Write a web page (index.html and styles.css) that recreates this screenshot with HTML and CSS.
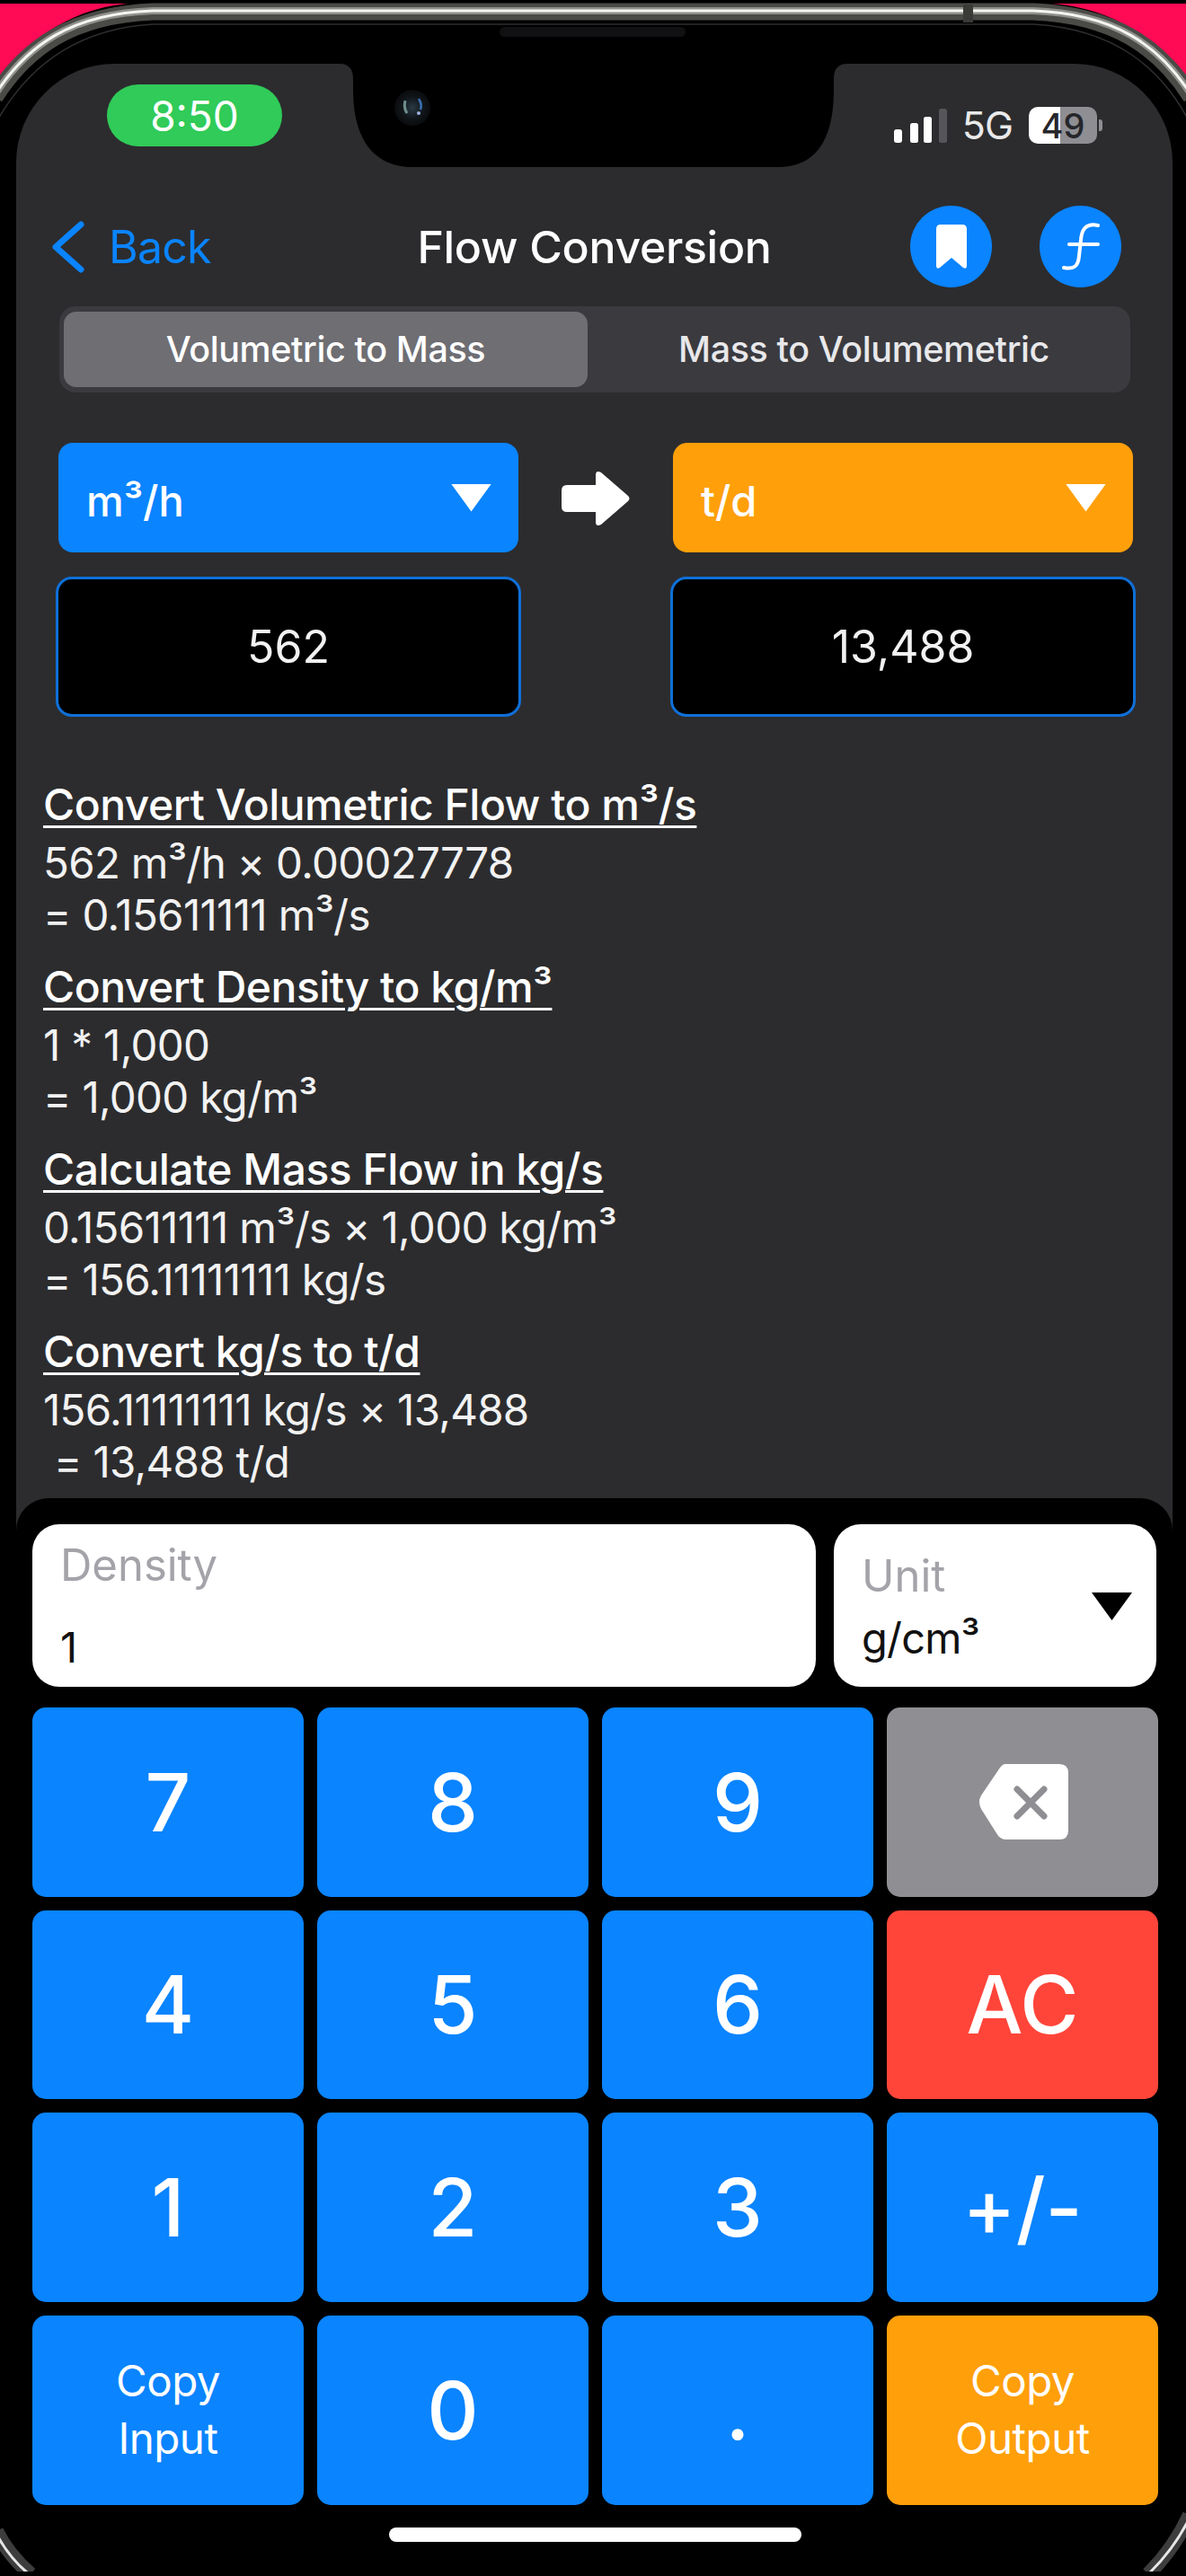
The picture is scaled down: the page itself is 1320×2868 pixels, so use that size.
FILE: index.html
```html
<!DOCTYPE html>
<html lang="en">
<head>
<meta charset="utf-8">
<title>Flow Conversion</title>
<link rel="stylesheet" href="styles.css">
</head>
<body>
<main class="screen">
  <header class="status">
    <div class="time">8:50</div>
    <div class="status-right">
      <svg class="signal" viewBox="0 0 59 38" width="59" height="38" aria-hidden="true">
        <rect x="0" y="23" width="9" height="15" rx="3" fill="#fff"/>
        <rect x="18" y="16" width="9" height="22" rx="2.5" fill="#fff"/>
        <rect x="33" y="9" width="9" height="29" rx="2.5" fill="#fff"/>
        <rect x="50" y="0" width="9" height="38" rx="2.5" fill="#55555a"/>
      </svg>
      <span class="net">5G</span>
      <span class="battery"><span class="battery-level">49</span></span>
      <span class="battery-nub"></span>
    </div>
  </header>

  <nav class="nav">
    <div class="back">
      <svg class="chevron" viewBox="0 0 38 58" width="38" height="58" aria-hidden="true"><path d="M33 4 L5 29 L33 54" fill="none" stroke="#0a84ff" stroke-width="7" stroke-linecap="round" stroke-linejoin="round"/></svg>
      <span>Back</span>
    </div>
    <h1 class="title">Flow Conversion</h1>
    <div class="nav-actions">
      <button class="round-btn" type="button" aria-label="Bookmark">
        <svg viewBox="0 0 34 50" width="34" height="50" aria-hidden="true"><path d="M5 0 H29 Q34 0 34 5 V46 Q34 50 30 48 L17 37 L4 48 Q0 50 0 46 V5 Q0 0 5 0 Z" fill="#fff"/></svg>
      </button>
      <button class="round-btn" type="button" aria-label="Formula">
        <svg viewBox="0 0 91 91" width="91" height="91" aria-hidden="true"><path d="M65 22 C52 19 47 26 46 38 L44 56 C43 68 38 71 27 69 M33 43 H65" fill="none" stroke="#fff" stroke-width="4" stroke-linecap="round"/></svg>
      </button>
    </div>
  </nav>

  <div class="segmented">
    <div class="segment is-active">Volumetric to Mass</div>
    <div class="segment">Mass to Volumemetric</div>
  </div>

  <section class="converter">
    <div class="select select-blue"><span class="select-label">m³/h</span><i class="tri"></i></div>
    <svg class="arrow" viewBox="0 0 78 62" width="78" height="62" aria-hidden="true"><path d="M7 16 H39 V5 Q39 -1 45 2 L75 28 Q78 31 75 34 L45 60 Q39 63 39 57 V46 H7 Q1 46 1 40 V22 Q1 16 7 16 Z" fill="#fff"/></svg>
    <div class="select select-orange"><span class="select-label">t/d</span><i class="tri"></i></div>
    <div class="value">562</div>
    <div></div>
    <div class="value">13,488</div>
  </section>

  <section class="steps">
    <div class="step">
      <h2>Convert Volumetric Flow to m³/s</h2>
      <p>562 m³/h × 0.00027778</p>
      <p>= 0.15611111 m³/s</p>
    </div>
    <div class="step">
      <h2>Convert Density to kg/m³</h2>
      <p>1 * 1,000</p>
      <p>= 1,000 kg/m³</p>
    </div>
    <div class="step">
      <h2>Calculate Mass Flow in kg/s</h2>
      <p>0.15611111 m³/s × 1,000 kg/m³</p>
      <p>= 156.11111111 kg/s</p>
    </div>
    <div class="step">
      <h2>Convert kg/s to t/d</h2>
      <p>156.11111111 kg/s × 13,488</p>
      <p class="indent">= 13,488 t/d</p>
    </div>
  </section>

  <section class="keypad">
    <div class="fields">
      <div class="field field-density">
        <label>Density</label>
        <div class="field-value">1</div>
      </div>
      <div class="field field-unit">
        <div>
          <label>Unit</label>
          <div class="field-value">g/cm³</div>
        </div>
        <i class="tri tri-dark"></i>
      </div>
    </div>
    <div class="keys">
      <button class="key" type="button">7</button>
      <button class="key" type="button">8</button>
      <button class="key" type="button">9</button>
      <button class="key key-grey" type="button" aria-label="Delete">
        <svg class="backspace" viewBox="0 0 100 84" width="100" height="84" aria-hidden="true"><path d="M30 0 H90 Q100 0 100 10 V74 Q100 84 90 84 H30 Q26 84 22 80 L3 50 Q-1 42 3 35 L24 4 Q27 0 30 0 Z" fill="#fff"/><path d="M43 28 L73 58 M73 28 L43 58" stroke="#8e8e93" stroke-width="7" stroke-linecap="round"/></svg>
      </button>
      <button class="key" type="button">4</button>
      <button class="key" type="button">5</button>
      <button class="key" type="button">6</button>
      <button class="key key-red" type="button">AC</button>
      <button class="key" type="button">1</button>
      <button class="key" type="button">2</button>
      <button class="key" type="button">3</button>
      <button class="key" type="button">+/-</button>
      <button class="key key-small" type="button">Copy<br>Input</button>
      <button class="key" type="button">0</button>
      <button class="key" type="button">.</button>
      <button class="key key-small key-orange" type="button">Copy<br>Output</button>
    </div>
    <div class="home"></div>
  </section>
</main>

<svg class="frame" viewBox="0 0 1320 2868" width="1320" height="2868" aria-hidden="true">
  <defs>
    <radialGradient id="lens" cx="50%" cy="50%" r="50%">
      <stop offset="0" stop-color="#2b3a46"/>
      <stop offset="0.6" stop-color="#10161b"/>
      <stop offset="1" stop-color="#0b0b0c"/>
    </radialGradient>
  </defs>
  <path d="M378 71 Q393 71 393 88 V100 C393 160 420 186 459 186 H866 C905 186 928 160 928 100 V88 Q928 71 943 71 Z" fill="#000"/>
  <rect x="556" y="30" width="207" height="11" rx="5.5" fill="#111113"/>
  <circle cx="459" cy="120" r="20" fill="url(#lens)"/>
  <path d="M451 112 Q449 120 453 126" stroke="#6f8f8a" stroke-width="3" fill="none"/>
  <circle cx="466" cy="126" r="2" fill="#9fb3e0"/>
  <path d="M466 110 Q470 116 468 122" stroke="#3c6fb0" stroke-width="2.5" fill="none"/>

  <path d="M0 4 H142 C100 8 50 25 0 84 Z" fill="#ff0a55"/>
  <path d="M1320 4 H1170 C1220 8 1270 25 1320 88 Z" fill="#ff0a55"/>
  <rect x="0" y="0" width="1320" height="4" fill="#000"/>

  <g fill="none">
    <path d="M-6 108 C30 52 80 17 170 13 H1150 C1240 17 1290 52 1326 108" stroke="#4a4a47" stroke-width="19"/>
    <path d="M-6 106 C30 50 80 15 170 12 H1150 C1240 15 1290 50 1326 106" stroke="#8f8f8b" stroke-width="8"/>
    <path d="M-6 106 C30 50 80 15 170 12 H1150 C1240 15 1290 50 1326 106" stroke="#f4f4f0" stroke-width="3"/>
    <path d="M-4 136 C30 75 85 32 170 27 H1150 C1240 32 1292 75 1324 136" stroke="#2e2e30" stroke-width="1.5"/>
    <path d="M-4 2818 C6 2838 18 2852 34 2866" stroke="#3d3d3d" stroke-width="16"/>
    <path d="M-4 2821 C6 2840 16 2852 30 2864" stroke="#e6e6e6" stroke-width="3"/>
    <path d="M1324 2800 C1312 2826 1298 2846 1278 2866" stroke="#3d3d3d" stroke-width="16"/>
    <path d="M1324 2803 C1312 2828 1298 2846 1280 2864" stroke="#e6e6e6" stroke-width="3"/>
  </g>
  <rect x="1072" y="5" width="11" height="20" fill="#3a3a38"/>
  <rect x="0" y="2863" width="1320" height="5" fill="#000"/>
</svg>
</body>
</html>
```

FILE: styles.css
```css
* { box-sizing: border-box; }

html, body {
  margin: 0;
  padding: 0;
}

body {
  position: relative;
  width: 1320px;
  height: 2868px;
  overflow: hidden;
  background: #000;
  font-family: "Inter", "Liberation Sans", sans-serif;
  color: #fff;
  padding: 71px 15px 0 18px;
}

.screen {
  height: 100%;
  background: #2c2c2e;
  border-radius: 110px 110px 0 0;
  display: flex;
  flex-direction: column;
  overflow: hidden;
}

.frame {
  position: absolute;
  left: 0;
  top: 0;
  pointer-events: none;
}

/* Status bar */
.status {
  display: flex;
  justify-content: space-between;
  align-items: flex-start;
  padding: 23px 78px 0 101px;
  height: 158px;
  flex-shrink: 0;
}

.time {
  width: 195px;
  height: 69px;
  border-radius: 35px;
  background: #30cb58;
  display: flex;
  align-items: center;
  justify-content: center;
  font-size: 46px;
  line-height: 1;
}

.status-right {
  display: flex;
  align-items: center;
  margin-top: 25px;
}

.signal { display: block; }

.net {
  font-size: 43px;
  line-height: 41px;
  margin-left: 17px;
  letter-spacing: -1px;
  color: #e9e9ea;
}

.battery {
  margin-left: 18px;
  width: 76px;
  height: 41px;
  border-radius: 10px;
  background: linear-gradient(90deg, #fff 0, #fff 46%, #8e8e93 46%, #8e8e93 100%);
  display: flex;
  align-items: center;
  justify-content: center;
}

.battery-level {
  font-size: 38px;
  font-weight: 500;
  line-height: 1;
  color: #26262a;
}

.battery-nub {
  width: 4px;
  height: 13px;
  margin-left: 2px;
  border-radius: 0 3px 3px 0;
  background: #8e8e93;
}

/* Navigation */
.nav {
  display: grid;
  grid-template-columns: 1fr auto 1fr;
  align-items: center;
  height: 91px;
  padding: 0 39px;
  flex-shrink: 0;
}

.back {
  display: flex;
  align-items: center;
  gap: 26px;
  font-size: 50px;
  letter-spacing: -0.8px;
  color: #0a84ff;
}

.chevron { display: block; }

.title {
  margin: 0;
  font-size: 50px;
  font-weight: 500;
  letter-spacing: -0.3px;
  line-height: 1;
  white-space: nowrap;
}

.nav-actions {
  display: flex;
  justify-content: flex-end;
  gap: 53px;
  margin-right: 18px;
}

.round-btn {
  width: 91px;
  height: 91px;
  padding: 0;
  border: 0;
  border-radius: 50%;
  background: #0a84ff;
  display: flex;
  align-items: center;
  justify-content: center;
}

/* Segmented control */
.segmented {
  margin: 21px 47px 0 48px;
  height: 96px;
  padding: 6px 5px;
  border-radius: 18px;
  background: #3a3a3f;
  display: grid;
  grid-template-columns: 1fr 1fr;
  gap: 16px;
  flex-shrink: 0;
}

.segment {
  display: flex;
  align-items: center;
  justify-content: center;
  border-radius: 14px;
  font-size: 39.5px;
  font-weight: 500;
  letter-spacing: -0.4px;
  color: #e8e8ea;
}

.segment.is-active {
  background: #6e6e73;
  color: #fff;
}

/* Converter */
.converter {
  display: grid;
  grid-template-columns: 518px 166px 518px;
  grid-template-rows: 122px 156px;
  row-gap: 27px;
  align-items: center;
  justify-items: center;
  margin-top: 56px;
  padding-left: 44px;
  flex-shrink: 0;
}

.select {
  width: 512px;
  height: 122px;
  border-radius: 16px;
  display: flex;
  align-items: center;
  justify-content: space-between;
  padding: 0 30px 0 31px;
  font-size: 47px;
  font-weight: 500;
}

.select-label { padding-top: 6px; }

.select-blue { background: #0a84ff; }
.select-orange { background: #ff9f0a; }

.tri {
  display: block;
  width: 45px;
  height: 31px;
  background: #fff;
  clip-path: polygon(0 0, 100% 0, 50% 100%);
}

.tri-dark { background: #000; }

.arrow { display: block; margin-top: 2px; }

.value {
  width: 518px;
  height: 156px;
  border: 3px solid #0f70d8;
  border-radius: 18px;
  background: #000;
  display: flex;
  align-items: center;
  justify-content: center;
  font-size: 50px;
  color: #f2f2f2;
}

/* Working */
.steps {
  flex: 1;
  min-height: 0;
  padding: 62px 0 0 30px;
}

.step {
  margin-bottom: 15px;
}

.step h2 {
  margin: 0;
  font-size: 48px;
  line-height: 72px;
  font-weight: 500;
  text-decoration: underline;
  text-decoration-thickness: 3px;
  text-underline-offset: 6px;
  letter-spacing: -0.5px;
}

.step p {
  margin: 0;
  font-size: 47.5px;
  line-height: 58px;
  font-weight: 400;
  letter-spacing: -0.7px;
  color: #f2f2f2;
}

.step .indent { padding-left: 12px; }

/* Keypad */
.keypad {
  height: 1200px;
  flex-shrink: 0;
  background: #000;
  border-radius: 36px 36px 0 0;
  padding: 29px 16px 0 18px;
}

.fields {
  display: grid;
  grid-template-columns: 872px 359px;
  grid-template-rows: 181px;
  gap: 20px;
}

.field {
  background: #fff;
  border-radius: 30px;
  color: #000;
}

.field label {
  display: block;
  color: #a3a3a9;
  font-size: 49px;
  line-height: 58px;
}

.field-value {
  font-size: 47px;
  line-height: 58px;
  color: #111;
}

.field-density {
  padding: 17px 31px;
}

.field-density .field-value {
  margin-top: 33px;
}

.field-unit {
  padding: 29px 27px 0 31px;
  display: flex;
  justify-content: space-between;
  align-items: flex-start;
}

.field-unit .tri-dark {
  margin-top: 47px;
}

.field-unit .field-value {
  margin-top: 11px;
  letter-spacing: -0.8px;
}

.keys {
  display: grid;
  grid-template-columns: repeat(4, 1fr);
  grid-auto-rows: 210.67px;
  gap: 15px;
  margin-top: 23px;
}

.key {
  border: 0;
  padding: 0;
  border-radius: 15px;
  background: #0a84ff;
  color: #fff;
  font-family: inherit;
  font-size: 89px;
  font-weight: 550;
  line-height: 1;
  display: flex;
  align-items: center;
  justify-content: center;
  text-align: center;
}

.key-grey { background: #8e8e93; }
.key-red { background: #ff453a; }
.key-orange { background: #ff9f0a; }

.key-small {
  font-size: 47.5px;
  font-weight: 400;
  line-height: 64px;
  letter-spacing: -0.5px;
}

.backspace { margin-left: 2px; }

.home {
  width: 459px;
  height: 16px;
  border-radius: 8px;
  background: #fff;
  margin: 25px auto 0;
}
```
